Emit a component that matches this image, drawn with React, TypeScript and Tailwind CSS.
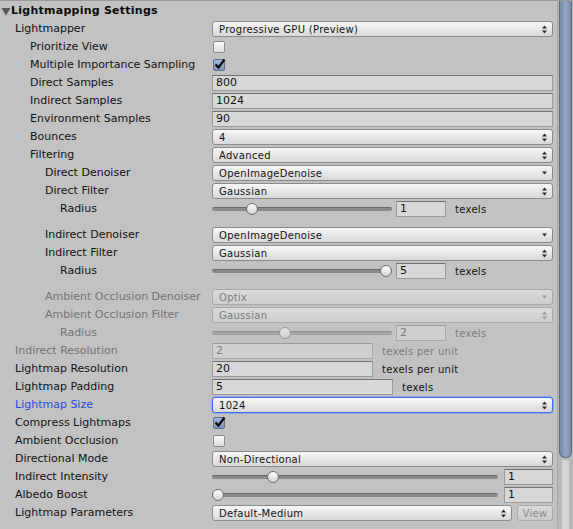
import type { ReactNode } from 'react'
import clsx from 'clsx'

const indent = ['pl-[15px]', 'pl-[30px]', 'pl-[45px]', 'pl-[60px]']

function Row({ label, level = 0, tone = 'normal', children }: { label: string; level?: number; tone?: 'normal' | 'off' | 'blue'; children?: ReactNode }) {
  return (
    <div className="flex h-[18px] items-center">
      <div
        className={clsx(
          'w-[212px] shrink-0 overflow-hidden whitespace-nowrap text-[11px] leading-[18px]',
          indent[level],
          tone === 'normal' && 'text-[#111]',
          tone === 'off' && 'text-[#747474]',
          tone === 'blue' && 'text-[#1d4ae4]'
        )}
      >
        {label}
      </div>
      <div className="flex min-w-0 flex-1 items-center pr-[4px]">{children}</div>
    </div>
  )
}

function Arrows({ single, off }: { single?: boolean; off?: boolean }) {
  const c = off ? '#9a9a9a' : '#2a2a2a'
  if (single)
    return (
      <svg width="5" height="4" viewBox="0 0 5 4" className="shrink-0">
        <path d="M0 0.5h5L2.5 3.5z" fill={c} />
      </svg>
    )
  return (
    <svg width="5" height="9" viewBox="0 0 5 9" className="shrink-0">
      <path d="M2.5 0.5L5 3.5H0z" fill={c} />
      <path d="M0 5.5h5L2.5 8.5z" fill={c} />
    </svg>
  )
}

function Popup({ value, single, off, focus, className }: { value: string; single?: boolean; off?: boolean; focus?: boolean; className?: string }) {
  return (
    <div
      className={clsx(
        'flex h-[16px] items-center justify-between rounded-[3px] border bg-linear-to-b pl-[6px] pr-[5px] text-[10px] tracking-[0.3px]',
        off ? 'border-[#a9a9a9] from-[#dadada] to-[#cdcdcd] text-[#7d7d7d]' : 'from-[#f7f7f7] to-[#d8d8d8] text-[#111]',
        !off && (focus ? 'border-[#3c6cf0] shadow-[0_0_0_0.5px_#6d93f5]' : 'border-[#8b8b8b]'),
        className ?? 'flex-1'
      )}
    >
      <span className="truncate">{value}</span>
      <Arrows single={single} off={off} />
    </div>
  )
}

function Field({ value, off, className }: { value: string; off?: boolean; className?: string }) {
  return (
    <div
      className={clsx(
        'flex h-[16px] items-center border pl-[3px] text-[11px]',
        off ? 'border-[#a8a8a8] border-t-[#9a9a9a] bg-[#cfcfcf] text-[#7d7d7d]' : 'border-[#9a9a9a] border-t-[#6f6f6f] bg-[#d7d7d7] text-[#111]',
        className ?? 'flex-1'
      )}
    >
      {value}
    </div>
  )
}

function Check({ on }: { on?: boolean }) {
  return (
    <div
      className={clsx(
        'relative ml-[1px] h-[12px] w-[12px] rounded-[2px] border bg-linear-to-b',
        on ? 'border-[#5f6f8c] from-[#a4b6d6] to-[#7d95c0]' : 'border-[#8a8a8a] from-[#fafafa] to-[#dedede]'
      )}
    >
      {on && (
        <svg width="12" height="12" viewBox="0 0 12 12" className="absolute left-[0px] top-[-2px]">
          <path d="M1.5 6.5L4.5 9.5L10.5 1.5" fill="none" stroke="#0a0a0a" strokeWidth="2.2" />
        </svg>
      )}
    </div>
  )
}

function Slider({ frac, off, className }: { frac: number; off?: boolean; className?: string }) {
  return (
    <div className={clsx('relative h-[16px]', className ?? 'flex-1')}>
      <div className={clsx('absolute left-0 right-0 top-[6px] h-[4px] rounded-full border-t', off ? 'border-[#8e8e8e] bg-[#a4a4a4]' : 'border-[#6a6a6a] bg-[#8a8a8a]')} />
      <div
        className={clsx('absolute top-[2px] h-[12px] w-[12px] rounded-full border bg-linear-to-b', off ? 'border-[#9a9a9a] from-[#e4e4e4] to-[#cfcfcf]' : 'border-[#6c6c6c] from-[#ffffff] to-[#d2d2d2]')}
        style={{ left: `calc(${frac} * (100% - 12px))` }}
      />
    </div>
  )
}

function Unit({ text, off, className }: { text: string; off?: boolean; className?: string }) {
  return <span className={clsx('whitespace-nowrap text-[10px] tracking-[0.3px]', off ? 'text-[#7d7d7d]' : 'text-[#111]', className)}>{text}</span>
}

function RadiusRow({ value, off }: { value: number; off?: boolean }) {
  return (
    <Row label="Radius" level={3} tone={off ? 'off' : 'normal'}>
      <Slider frac={value / 5} off={off} className="w-[180px]" />
      <Field value={String(value)} off={off} className="ml-[4px] w-[50px]" />
      <Unit text="texels" off={off} className="ml-[9px]" />
    </Row>
  )
}

export default function App() {
  return (
    <div className="flex h-[529px] w-[573px] overflow-hidden border-t border-[#9a9a9a] bg-[#c2c2c2] font-['DejaVu_Sans',sans-serif]">
      <div className="min-w-0 flex-1">
        <div className="flex h-[19px] items-center pt-[1px]">
          <svg width="10" height="9" viewBox="0 0 10 9" className="ml-[1px] shrink-0">
            <path d="M0.5 1h9L5 8.5z" fill="#5a5a5a" />
          </svg>
          <span className="text-[11px] font-bold tracking-[0.25px] text-[#0b0b0b]">Lightmapping Settings</span>
        </div>

        <Row label="Lightmapper">
          <Popup value="Progressive GPU (Preview)" />
        </Row>
        <Row label="Prioritize View" level={1}>
          <Check />
        </Row>
        <Row label="Multiple Importance Sampling" level={1}>
          <Check on />
        </Row>
        <Row label="Direct Samples" level={1}>
          <Field value="800" />
        </Row>
        <Row label="Indirect Samples" level={1}>
          <Field value="1024" />
        </Row>
        <Row label="Environment Samples" level={1}>
          <Field value="90" />
        </Row>
        <Row label="Bounces" level={1}>
          <Popup value="4" />
        </Row>
        <Row label="Filtering" level={1}>
          <Popup value="Advanced" />
        </Row>
        <Row label="Direct Denoiser" level={2}>
          <Popup value="OpenImageDenoise" single />
        </Row>
        <Row label="Direct Filter" level={2}>
          <Popup value="Gaussian" />
        </Row>
        <RadiusRow value={1} />
        <div className="h-[8px]" />
        <Row label="Indirect Denoiser" level={2}>
          <Popup value="OpenImageDenoise" single />
        </Row>
        <Row label="Indirect Filter" level={2}>
          <Popup value="Gaussian" />
        </Row>
        <RadiusRow value={5} />
        <div className="h-[8px]" />
        <Row label="Ambient Occlusion Denoiser" level={2} tone="off">
          <Popup value="Optix" single off />
        </Row>
        <Row label="Ambient Occlusion Filter" level={2} tone="off">
          <Popup value="Gaussian" off />
        </Row>
        <RadiusRow value={2} off />
        <Row label="Indirect Resolution" tone="off">
          <Field value="2" off className="w-[161px]" />
          <Unit text="texels per unit" off className="ml-[9px]" />
        </Row>
        <Row label="Lightmap Resolution">
          <Field value="20" className="w-[161px]" />
          <Unit text="texels per unit" className="ml-[9px]" />
        </Row>
        <Row label="Lightmap Padding">
          <Field value="5" className="w-[181px]" />
          <Unit text="texels" className="ml-[9px]" />
        </Row>
        <Row label="Lightmap Size" tone="blue">
          <Popup value="1024" focus />
        </Row>
        <Row label="Compress Lightmaps">
          <Check on />
        </Row>
        <Row label="Ambient Occlusion">
          <Check />
        </Row>
        <Row label="Directional Mode">
          <Popup value="Non-Directional" />
        </Row>
        <Row label="Indirect Intensity">
          <Slider frac={1 / 5} />
          <Field value="1" className="ml-[6px] w-[49px] flex-none" />
        </Row>
        <Row label="Albedo Boost">
          <Slider frac={0} />
          <Field value="1" className="ml-[6px] w-[49px] flex-none" />
        </Row>
        <Row label="Lightmap Parameters">
          <Popup value="Default-Medium" />
          <div className="ml-[5px] flex h-[16px] w-[36px] items-center justify-center rounded-[3px] border border-[#a9a9a9] bg-linear-to-b from-[#d9d9d9] to-[#cbcbcb] text-[10px] tracking-[0.3px] text-[#8a8a8a]">
            View
          </div>
        </Row>
      </div>

      {/* scrollbar */}
      <div className="flex w-[16px] shrink-0 border-l border-[#a8a8a8] bg-[#b9b9b9] pl-[1px]">
        <div className="flex w-[13px] flex-col">
          <div className="h-[457px] rounded-b-[6px] border border-t-0 border-[#5d6b84] bg-linear-to-r from-[#7585a2] via-[#97a6c0] to-[#7b8ba8]" />
          <div className="mx-auto mt-[2px] w-[7px] flex-1 bg-[#d4d4d4]" />
        </div>
      </div>
    </div>
  )
}
